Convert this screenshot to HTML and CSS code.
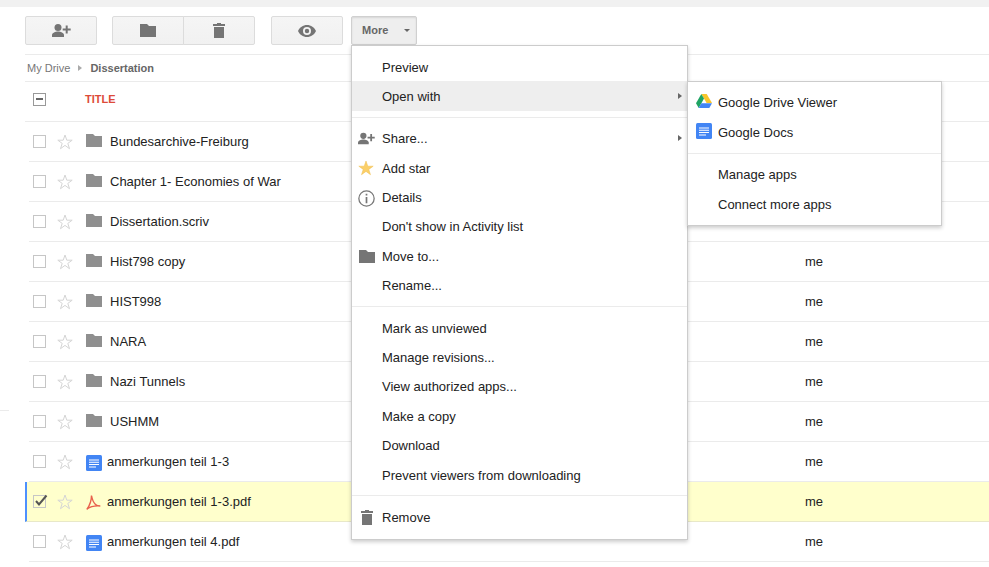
FILE: index.html
```html
<!DOCTYPE html>
<html lang="en">
<head>
    <meta charset="UTF-8">
    <title>Dissertation - Google Drive</title>
    <link rel="stylesheet" href="styles.css">
</head>
<body>
    <svg class="defs" width="0" height="0">
        <symbol id="ic-share" viewBox="0 0 19 13">
            <circle cx="6" cy="3.500" r="3.500"/>
            <path d="M0 13v-2c0-2.300 3.500-3.500 6-3.500s6 1.200 6 3.500v2z"/>
            <path d="M13.700 1.500h2v3h3v2h-3v3h-2v-3h-3v-2h3z"/>
        </symbol>
        <symbol id="ic-folder" viewBox="0 0 16 13">
            <path d="M0 0h7l2 2h7v11H0z"/>
        </symbol>
        <symbol id="ic-trash" viewBox="0 0 12 15">
            <path d="M4 0h4v1h4v2H0V1h4zM1 4h10v11H1z"/>
        </symbol>
        <symbol id="ic-eye" viewBox="0 0 18 12">
            <path fill-rule="evenodd" d="M9 0c4 0 7.400 2.500 9 6-1.600 3.500-5 6-9 6s-7.400-2.500-9-6c1.600-3.500 5-6 9-6zm0 2a4 4 0 1 0 0 8 4 4 0 0 0 0-8zm0 1.800a2.200 2.200 0 1 1 0 4.400 2.200 2.200 0 0 1 0-4.400z"/>
        </symbol>
        <symbol id="ic-star" viewBox="0 0 16 16">
            <path d="M8 1l1.800 5.200h5.400l-4.400 3.200 1.700 5.300L8 11.400l-4.500 3.300 1.700-5.300L.8 6.200h5.400z"/>
        </symbol>
        <symbol id="ic-doc" viewBox="0 0 16 16">
            <rect width="16" height="16" rx="1.500" fill="#4285f4"/>
            <path d="M3 4.500h10v1H3zM3 6.800h10v1H3zM3 9.100h10v1H3zM3 11.400h7v1H3z" fill="#fff"/>
        </symbol>
        <symbol id="ic-pdf" viewBox="0 0 16 16">
            <path d="M5.500 1.500c.5 3 2 7 4 9 1 1 3 1.500 4.800 1.500M5.500 1.500C5.500 5 4 11 .8 15.500M1 15c2-1.500 7-3.500 13.300-3" fill="none" stroke="#e8604c" stroke-width="1.400"/>
        </symbol>
        <symbol id="ic-drive" viewBox="0 0 16 14">
            <path d="M5.300 0h5.400l5.300 9h-5.400z" fill="#f7c52c"/>
            <path d="M5.300 0l2.700 4.600L2.700 14 0 9.300z" fill="#1fa463"/>
            <path d="M5.300 9.300H16L13.300 14H2.700z" fill="#4285f4"/>
        </symbol>
    </svg>

    <div class="top-band"></div>
    <div class="side-tick"></div>

    <div class="toolbar">
        <button class="btn"><svg class="ic ic-share"><use href="#ic-share"/></svg></button>
        <div class="btn-group">
            <button class="btn"><svg class="ic ic-folder"><use href="#ic-folder"/></svg></button>
            <button class="btn"><svg class="ic ic-trash"><use href="#ic-trash"/></svg></button>
        </div>
        <button class="btn"><svg class="ic ic-eye"><use href="#ic-eye"/></svg></button>
        <button class="btn-more">More<span class="caret"></span></button>
    </div>

    <div class="breadcrumb">
        <span class="crumb">My Drive</span>
        <span class="crumb-arrow"></span>
        <span class="crumb-current">Dissertation</span>
    </div>

    <div class="list-head">
        <span class="check check-minus"></span>
        <span class="title-col">TITLE</span>
    </div>

    <div class="rows">
        <div class="row"><span class="check"></span><svg class="star"><use href="#ic-star"/></svg><svg class="file-ic folder"><use href="#ic-folder"/></svg><span class="name">Bundesarchive-Freiburg</span></div>
        <div class="row"><span class="check"></span><svg class="star"><use href="#ic-star"/></svg><svg class="file-ic folder"><use href="#ic-folder"/></svg><span class="name">Chapter 1- Economies of War</span></div>
        <div class="row"><span class="check"></span><svg class="star"><use href="#ic-star"/></svg><svg class="file-ic folder"><use href="#ic-folder"/></svg><span class="name">Dissertation.scriv</span></div>
        <div class="row"><span class="check"></span><svg class="star"><use href="#ic-star"/></svg><svg class="file-ic folder"><use href="#ic-folder"/></svg><span class="name">Hist798 copy</span><span class="owner">me</span></div>
        <div class="row"><span class="check"></span><svg class="star"><use href="#ic-star"/></svg><svg class="file-ic folder"><use href="#ic-folder"/></svg><span class="name">HIST998</span><span class="owner">me</span></div>
        <div class="row"><span class="check"></span><svg class="star"><use href="#ic-star"/></svg><svg class="file-ic folder"><use href="#ic-folder"/></svg><span class="name">NARA</span><span class="owner">me</span></div>
        <div class="row"><span class="check"></span><svg class="star"><use href="#ic-star"/></svg><svg class="file-ic folder"><use href="#ic-folder"/></svg><span class="name">Nazi Tunnels</span><span class="owner">me</span></div>
        <div class="row"><span class="check"></span><svg class="star"><use href="#ic-star"/></svg><svg class="file-ic folder"><use href="#ic-folder"/></svg><span class="name">USHMM</span><span class="owner">me</span></div>
        <div class="row"><span class="check"></span><svg class="star"><use href="#ic-star"/></svg><svg class="file-ic doc"><use href="#ic-doc"/></svg><span class="name">anmerkungen teil 1-3</span><span class="owner">me</span></div>
        <div class="row row-selected"><span class="check check-on"><svg viewBox="0 0 14 14"><path d="M2 7l3 3.500L12.500 1.500" fill="none" stroke="#555" stroke-width="2"/></svg></span><svg class="star"><use href="#ic-star"/></svg><svg class="file-ic"><use href="#ic-pdf"/></svg><span class="name">anmerkungen teil 1-3.pdf</span><span class="owner">me</span></div>
        <div class="row"><span class="check"></span><svg class="star"><use href="#ic-star"/></svg><svg class="file-ic doc"><use href="#ic-doc"/></svg><span class="name">anmerkungen teil 4.pdf</span><span class="owner">me</span></div>
    </div>

    <!-- More menu -->
    <div class="menu more-menu">
        <div class="item">Preview</div>
        <div class="item item-active">Open with<span class="sub-arrow"></span></div>
        <div class="sep"></div>
        <div class="item"><svg class="item-ic item-share"><use href="#ic-share"/></svg>Share...<span class="sub-arrow"></span></div>
        <div class="item"><svg class="item-ic item-star"><use href="#ic-star"/></svg>Add star</div>
        <div class="item"><svg class="item-ic item-info" viewBox="0 0 16 16"><circle cx="8" cy="8" r="7.200" fill="none" stroke="#777" stroke-width="1.200"/><path d="M7.200 3.600h1.600v1.600H7.200zM7.200 6.600h1.600v5.800H7.200z" fill="#777"/></svg>Details</div>
        <div class="item">Don't show in Activity list</div>
        <div class="item"><svg class="item-ic item-folder"><use href="#ic-folder"/></svg>Move to...</div>
        <div class="item">Rename...</div>
        <div class="sep"></div>
        <div class="item">Mark as unviewed</div>
        <div class="item">Manage revisions...</div>
        <div class="item">View authorized apps...</div>
        <div class="item">Make a copy</div>
        <div class="item">Download</div>
        <div class="item">Prevent viewers from downloading</div>
        <div class="sep"></div>
        <div class="item"><svg class="item-ic item-trash"><use href="#ic-trash"/></svg>Remove</div>
    </div>

    <!-- Open with submenu -->
    <div class="menu sub-menu">
        <div class="item sub-item"><svg class="item-ic item-app"><use href="#ic-drive"/></svg>Google Drive Viewer</div>
        <div class="item sub-item"><svg class="item-ic item-app"><use href="#ic-doc"/></svg>Google Docs</div>
        <div class="sep"></div>
        <div class="item sub-item">Manage apps</div>
        <div class="item sub-item">Connect more apps</div>
    </div>
</body>
</html>
```

FILE: styles.css
```css
html, body {
    height: 567px;
    overflow: hidden;
}

body {
    margin: 0;
    background: #fff;
    color: #222;
    font-family: "Liberation Sans", Arial, sans-serif;
    font-size: 13px;
}

.defs {
    display: block;
    height: 0;
}

.top-band {
    height: 7px;
    background: #f1f1f1;
}

.side-tick {
    position: absolute;
    left: 0;
    top: 410px;
    width: 9px;
    height: 1px;
    background: #ebebeb;
}

/* toolbar */
.toolbar {
    display: flex;
    align-items: flex-start;
    height: 38px;
    margin-left: 25px;
    padding-top: 9px;
    border-bottom: 1px solid #ebebeb;
}

.btn {
    display: flex;
    align-items: center;
    justify-content: center;
    width: 72px;
    height: 29px;
    padding: 0;
    background: linear-gradient(to bottom, #f5f5f5, #f1f1f1);
    border: 1px solid #dcdcdc;
    border-radius: 2px;
    box-sizing: border-box;
}

.toolbar > .btn:first-child {
    margin-right: 15px;
}

.btn-group {
    display: flex;
    margin-right: 16px;
}

.btn-group .btn {
    border-radius: 2px 0 0 2px;
}

.btn-group .btn + .btn {
    margin-left: -1px;
    border-radius: 0 2px 2px 0;
}

.btn-more {
    position: relative;
    width: 66px;
    height: 29px;
    margin-left: 8px;
    padding: 0 0 1px 10px;
    background: #eee;
    border: 1px solid #d0d0d0;
    border-radius: 2px;
    box-shadow: inset 0 1px 2px rgba(0, 0, 0, .1);
    color: #666;
    font-family: inherit;
    font-size: 11px;
    font-weight: bold;
    text-align: left;
    box-sizing: border-box;
}

.caret {
    position: absolute;
    top: 12px;
    right: 6px;
    border: 3px solid transparent;
    border-top-color: #666;
}

.ic {
    display: block;
    fill: #757575;
}

.ic-share {
    width: 19px;
    height: 13px;
}

.ic-folder {
    width: 16px;
    height: 13px;
}

.ic-trash {
    width: 12px;
    height: 15px;
}

.ic-eye {
    width: 18px;
    height: 12px;
}

/* breadcrumb */
.breadcrumb {
    display: flex;
    align-items: center;
    height: 26px;
    margin-left: 27px;
    font-size: 11px;
    color: #777;
}

.crumb-arrow {
    margin: 0 8px;
    border: 3.500px solid transparent;
    border-left: 4px solid #aaa;
    border-right-width: 0;
}

.crumb-current {
    font-weight: bold;
    color: #666;
}

/* list */
.list-head {
    display: flex;
    align-items: center;
    height: 34px;
    padding-bottom: 5px;
    margin-left: 25px;
    border-top: 1px solid #ebebeb;
    border-bottom: 1px solid #ebebeb;
}

.title-col {
    margin-left: 39px;
    color: #dd4b39;
    font-size: 11px;
    font-weight: bold;
}

.check {
    position: relative;
    flex: none;
    width: 13px;
    height: 13px;
    margin-left: 4px;
    background: #fff;
    border: 1px solid #c6c6c6;
    box-sizing: border-box;
}

.list-head .check {
    margin-left: 8px;
}

.check-minus {
    border-color: #999;
}

.check-minus::after {
    content: "";
    position: absolute;
    left: 2px;
    right: 2px;
    top: 4px;
    height: 2px;
    background: #666;
}

.check-on {
    background: transparent;
}

.check-on svg {
    position: absolute;
    left: 0;
    top: -2px;
    width: 14px;
    height: 14px;
}

.row {
    display: flex;
    align-items: center;
    height: 39px;
    margin-left: 29px;
    border-bottom: 1px solid #ebebeb;
}

.star {
    flex: none;
    width: 16px;
    height: 16px;
    margin-left: 11px;
    fill: #fff;
    stroke: #d5d5d5;
    stroke-width: 1;
}

.row-selected .star {
    fill: transparent;
}

.file-ic {
    flex: none;
    width: 16px;
    height: 16px;
    margin: 0 5px 0 13px;
}

.folder {
    height: 13px;
    margin: 0 8px 2px 13px;
    fill: #8f8f8f;
}

.doc {
    margin-top: 2px;
}

.row-selected {
    margin-left: 25px;
    padding-left: 2px;
    background: #ffffcc;
    border-left: 2px solid #4d90fe;
    border-bottom-color: #e8e8c8;
}

.owner {
    width: 184px;
    margin-left: auto;
}

/* menus */
.menu {
    position: absolute;
    background: #fff;
    border: 1px solid #ccc;
    box-shadow: 0 2px 4px rgba(0, 0, 0, .2);
    box-sizing: border-box;
}

.more-menu {
    left: 351px;
    top: 45px;
    width: 337px;
    height: 495px;
    padding-top: 5px;
}

.more-menu .item:first-child {
    margin-top: 1.500px;
}

.sub-menu {
    left: 687px;
    top: 81px;
    width: 255px;
    height: 145px;
    padding-top: 6px;
}

.item {
    position: relative;
    height: 29.400px;
    line-height: 29.400px;
    padding-left: 30px;
    white-space: nowrap;
}

.item-active {
    background: #eee;
    box-shadow: 0 -1px 0 #eee;
}

.sub-item {
    height: 30px;
    line-height: 30px;
}

.sep {
    height: 1px;
    margin: 5.500px 0 6.500px;
    background: #ebebeb;
}

.sub-menu .sep {
    margin: 5px 0 6px;
}

.sub-arrow {
    position: absolute;
    right: 5px;
    top: 11px;
    border: 3.500px solid transparent;
    border-left: 4px solid #666;
    border-right-width: 0;
}

.item-ic {
    position: absolute;
    fill: #757575;
}

.item-share {
    left: 6px;
    top: 8px;
    width: 17px;
    height: 13px;
}

.item-star {
    left: 6px;
    top: 6px;
    width: 16px;
    height: 16px;
    fill: #fbcf68;
    stroke: #efbe50;
    stroke-width: .5;
}

.item-info {
    left: 6px;
    top: 7px;
    width: 17px;
    height: 17px;
}

.item-folder {
    left: 7px;
    top: 8px;
    width: 16px;
    height: 13px;
}

.item-trash {
    left: 9px;
    top: 7px;
    width: 12px;
    height: 15px;
}

.item-app {
    left: 8px;
    top: 5px;
    width: 16px;
    height: 16px;
}
```
